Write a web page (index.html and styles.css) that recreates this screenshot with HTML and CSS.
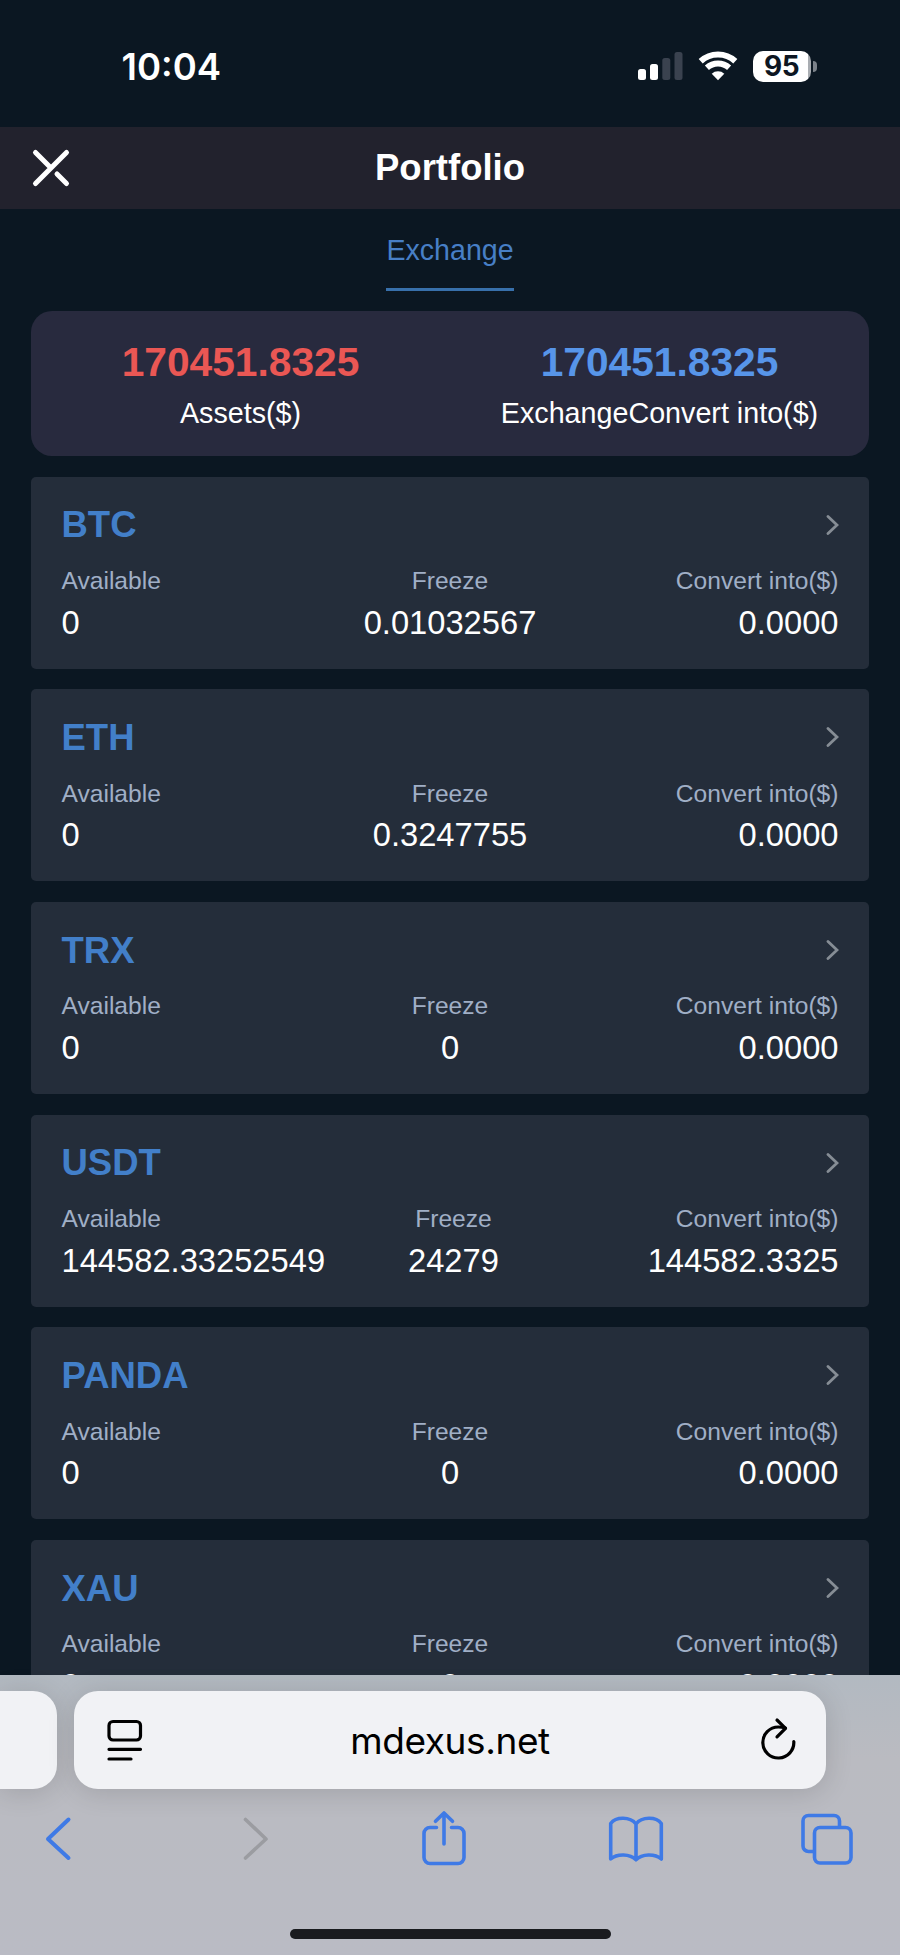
FILE: index.html
```html
<!DOCTYPE html>
<html lang="en">
<head>
  <meta charset="UTF-8">
  <title>Portfolio</title>
  <link rel="stylesheet" href="styles.css">
</head>
<body>

<!-- status bar -->
<div class="status">
  <span class="time">10:04</span>
  <svg class="signal" width="46" height="32" viewBox="0 0 46 32">
    <rect x="1" y="19" width="8" height="11" rx="2.5" fill="#fff"/>
    <rect x="13" y="14" width="8" height="16" rx="2.5" fill="#fff"/>
    <rect x="25.3" y="8" width="8" height="22" rx="2.5" fill="#3a424f"/>
    <rect x="37.5" y="2" width="8" height="28" rx="2.5" fill="#3a424f"/>
  </svg>
  <svg class="wifi" width="40" height="32" viewBox="0 0 40 32">
    <g fill="none" stroke="#fff" stroke-width="6">
      <path d="M2.7 11.3a25.5 25.5 0 0 1 34.6 0"/>
      <path d="M8.9 17.8a16.5 16.5 0 0 1 22.2 0"/>
    </g>
    <path d="M20 30.3l-6.3-6.5a9.2 9.2 0 0 1 12.6 0z" fill="#fff"/>
  </svg>
  <span class="battery">95</span>
  <span class="battery-tip"></span>
</div>

<!-- header -->
<div class="header">
  <svg class="close" width="40" height="40" viewBox="0 0 40 40">
    <path d="M4.5 35.5l31-31M4.5 4.5L20 20M26 26l9.5 9.5"/>
  </svg>
  <h1>Portfolio</h1>
</div>

<div class="tabs"><a class="tab">Exchange</a></div>

<div class="content">
  <div class="summary">
    <div class="total">
      <b class="red">170451.8325</b>
      <span>Assets($)</span>
    </div>
    <div class="total">
      <b class="blue">170451.8325</b>
      <span>ExchangeConvert into($)</span>
    </div>
  </div>

  <!-- coins -->
  <div class="coin">
    <div class="coin-head"><h2>BTC</h2><svg class="arrow" viewBox="0 0 14 22"><path d="M3 2.5l9 8.5-9 8.5"/></svg></div>
    <div class="row">
      <div class="cell"><label>Available</label><p>0</p></div>
      <div class="cell"><label>Freeze</label><p>0.01032567</p></div>
      <div class="cell"><label>Convert into($)</label><p>0.0000</p></div>
    </div>
  </div>

  <div class="coin">
    <div class="coin-head"><h2>ETH</h2><svg class="arrow" viewBox="0 0 14 22"><path d="M3 2.5l9 8.5-9 8.5"/></svg></div>
    <div class="row">
      <div class="cell"><label>Available</label><p>0</p></div>
      <div class="cell"><label>Freeze</label><p>0.3247755</p></div>
      <div class="cell"><label>Convert into($)</label><p>0.0000</p></div>
    </div>
  </div>

  <div class="coin">
    <div class="coin-head"><h2>TRX</h2><svg class="arrow" viewBox="0 0 14 22"><path d="M3 2.5l9 8.5-9 8.5"/></svg></div>
    <div class="row">
      <div class="cell"><label>Available</label><p>0</p></div>
      <div class="cell"><label>Freeze</label><p>0</p></div>
      <div class="cell"><label>Convert into($)</label><p>0.0000</p></div>
    </div>
  </div>

  <div class="coin">
    <div class="coin-head"><h2>USDT</h2><svg class="arrow" viewBox="0 0 14 22"><path d="M3 2.5l9 8.5-9 8.5"/></svg></div>
    <div class="row">
      <div class="cell"><label>Available</label><p>144582.33252549</p></div>
      <div class="cell"><label>Freeze</label><p>24279</p></div>
      <div class="cell"><label>Convert into($)</label><p>144582.3325</p></div>
    </div>
  </div>

  <div class="coin">
    <div class="coin-head"><h2>PANDA</h2><svg class="arrow" viewBox="0 0 14 22"><path d="M3 2.5l9 8.5-9 8.5"/></svg></div>
    <div class="row">
      <div class="cell"><label>Available</label><p>0</p></div>
      <div class="cell"><label>Freeze</label><p>0</p></div>
      <div class="cell"><label>Convert into($)</label><p>0.0000</p></div>
    </div>
  </div>

  <div class="coin">
    <div class="coin-head"><h2>XAU</h2><svg class="arrow" viewBox="0 0 14 22"><path d="M3 2.5l9 8.5-9 8.5"/></svg></div>
    <div class="row">
      <div class="cell"><label>Available</label><p>0</p></div>
      <div class="cell"><label>Freeze</label><p>0</p></div>
      <div class="cell"><label>Convert into($)</label><p>0.0000</p></div>
    </div>
  </div>
</div>

<!-- browser bar -->
<div class="browser">
  <div class="address-row">
    <div class="prev-tab"></div>
    <div class="address">
      <svg width="40" height="48" viewBox="0 0 40 48">
        <rect x="4" y="5.5" width="31.5" height="18.5" rx="4"/>
        <path d="M4 33.3h31.5M4 43h22"/>
      </svg>
      <span>mdexus.net</span>
      <svg width="40" height="48" viewBox="0 0 40 48">
        <path d="M34.8 25.5a15.500 15.500 0 1 1-15.500-14.500c3 0 5 .4 7 1"/>
        <path d="M18 4l8.5 8.300-8.5 8.500"/>
      </svg>
    </div>
  </div>
  <div class="nav">
    <svg class="back" viewBox="0 0 60 66"><path d="M40.500 14.500L20 34l20.500 19"/></svg>
    <svg class="forward" viewBox="0 0 60 66"><path d="M19.500 14.500L40 34 19.500 53"/></svg>
    <svg class="share" viewBox="0 0 60 66">
      <path d="M22.500 22.500H16a6 6 0 0 0-6 6v24a6 6 0 0 0 6 6h28a6 6 0 0 0 6-6v-24a6 6 0 0 0-6-6h-6.500"/>
      <path d="M30 39V8.500M21.500 16.300L30 8l8.500 8.300"/>
    </svg>
    <svg class="book" viewBox="0 0 60 66">
      <path d="M30 19C24 11.500 10 11.500 4.700 18.500V54c6.300-5.500 19.300-5.500 25.300.8 6-6.300 19-6.300 25.300-.8V18.500C50 11.500 36 11.500 30 19v35.500"/>
    </svg>
    <svg class="pages" viewBox="0 0 60 66">
      <rect x="17.500" y="22.500" width="36.500" height="35.500" rx="5.500"/>
      <path d="M17 46.500h-5.500a5.500 5.500 0 0 1-5.500-5.500V16a5.500 5.500 0 0 1 5.500-5.500H37a5.500 5.500 0 0 1 5.500 5.500v6"/>
    </svg>
  </div>
  <div class="home"></div>
</div>

</body>
</html>
```
FILE: styles.css
```css
* { box-sizing: border-box; }
body {
  margin: 0; height: 1955px; overflow: hidden;
  display: flex; flex-direction: column;
  font-family: "Liberation Sans", Arial, sans-serif;
  background-color: #0b1722; color: #fff;
}
h1, h2, p { margin: 0; }

/* status bar */
.status {
  flex: none; height: 127px; padding: 5px 83px 0 121.5px;
  display: flex; align-items: center;
  font-family: Inter, sans-serif;
}
.time { margin-right: auto; padding-top: 2px; font-size: 36.5px; font-weight: 600; }
.wifi { margin: 0 15px; }
.battery {
  width: 58px; height: 31px; border-radius: 10px;
  background: linear-gradient(to right, #fff 55px, #a9adb2 55px);
  color: #0d1622; font-size: 28px; font-weight: 700; letter-spacing: -.5px;
  line-height: 31px; text-align: center; padding-right: 1px;
}
.battery-tip {
  width: 4px; height: 11px; margin-left: 2px;
  border-radius: 0 4px 4px 0; background-color: #7c828a;
}

.header {
  flex: none; height: 82px; padding: 0 31px;
  display: flex; align-items: center;
  background-color: #22222d;
}
.header h1 { flex: 1; margin-right: 40px; text-align: center; font-size: 36.5px; line-height: 42px; }
.close { fill: none; stroke: #fff; stroke-width: 5; stroke-linecap: round; }

.tabs { flex: none; height: 102px; display: flex; justify-content: center; }
.tab {
  height: 82px; padding-top: 25px;
  border-bottom: 3px solid #3870ab;
  color: #477fc6; font-size: 28.6px; line-height: 33px;
}

.content { flex: 1; min-height: 0; overflow: hidden; padding: 0 31px; }
.summary {
  display: flex; height: 144.7px; margin-bottom: 21px; padding-top: 28px;
  border-radius: 21px; background-color: #282a3e;
}
.total { flex: 1; display: flex; flex-direction: column; align-items: center; }
.total b { font-size: 40.7px; line-height: 46px; }
.total span { margin-top: 12px; font-size: 28.7px; line-height: 33px; }
.red { color: #ea5754; }
.blue { color: #5795e9; }

.coin {
  height: 192px; margin-bottom: 20.7px; padding: 27px 30.5px 0;
  border-radius: 5px; background-color: #242d3a;
}
.coin-head { display: flex; justify-content: space-between; align-items: center; height: 42px; }
.coin-head h2 { padding-top: 1px; color: #427fc9; font-size: 36.5px; line-height: 42px; }
.arrow { width: 14px; height: 22px; fill: none; stroke: #868d95; stroke-width: 2.8; stroke-linecap: round; }
.row { display: flex; margin-top: 20.3px; }
.cell { flex: 1; text-align: center; }
.cell:first-child { text-align: left; }
.cell:last-child { text-align: right; }
.cell label { display: block; color: #a0afc6; font-size: 24.6px; line-height: 29px; }
.cell p { margin-top: 8.6px; font-size: 32.7px; line-height: 38px; }

/* browser bar */
.browser {
  flex: none; height: 280px; padding-top: 16px;
  background: linear-gradient(#b2b9c1, #babbc1 30%, #babbc4);
}
.address-row { display: flex; gap: 17px; height: 98px; }
.prev-tab, .address { background-color: #f1f2f5; box-shadow: 0 3px 28px rgba(0, 0, 0, .14); }
.prev-tab { width: 57px; border-radius: 0 24px 24px 0; }
.address {
  width: 752px; padding: 0 27px 0 31px; border-radius: 24px;
  display: flex; align-items: center; justify-content: space-between;
  color: #000; font-family: Inter, sans-serif; font-size: 37px; letter-spacing: -.4px;
}
.address span { margin-right: 4px; }
.address svg { fill: none; stroke: #000; stroke-width: 3.2; stroke-linecap: round; stroke-linejoin: round; }
.nav { display: flex; margin-top: 16px; padding-left: 28px; }
.nav svg {
  width: 60px; height: 66px;
  fill: none; stroke: #3f7ae6; stroke-width: 3.6;
  stroke-linecap: round; stroke-linejoin: round;
}
.nav .back { margin-right: 138px; stroke-width: 4; }
.nav .forward { margin-right: 128px; stroke: #9b9ca1; }
.share { margin-right: 131.5px; }
.book { margin-right: 131px; }
.home { width: 321px; height: 10px; margin: 57.5px 0 0 290px; border-radius: 5px; background-color: #1a1b1f; }
```
